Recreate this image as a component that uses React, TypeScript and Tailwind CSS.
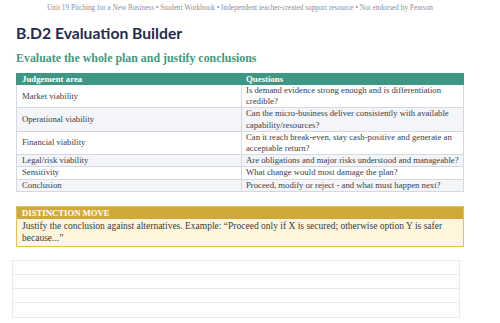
import React from "react";

const rows: [string, string[]][] = [
  ["Market viability", ["Is demand evidence strong enough and is differentiation", "credible?"]],
  ["Operational viability", ["Can the micro-business deliver consistently with available", "capability/resources?"]],
  ["Financial viability", ["Can it reach break-even, stay cash-positive and generate an", "acceptable return?"]],
  ["Legal/risk viability", ["Are obligations and major risks understood and manageable?"]],
  ["Sensitivity", ["What change would most damage the plan?"]],
  ["Conclusion", ["Proceed, modify or reject - and what must happen next?"]],
];

export default function App() {
  return (
    <div className="w-[500px] h-[323px] bg-white overflow-hidden" style={{ fontFamily: '"Liberation Serif", serif' }}>
      <div className="w-[480px] pt-[3px] text-center text-[7.3px] leading-[9px] text-[#8a8f9a] whitespace-nowrap">
        Unit 19 Pitching for a New Business • Student Workbook • Independent teacher-created support resource • Not endorsed by Pearson
      </div>
      <div className="px-4">
        <h1 className="mt-[11px] text-[15.7px] leading-[20px] font-bold text-[#1f2c4f]" style={{ fontFamily: '"Lato", sans-serif' }}>
          B.D2 Evaluation Builder
        </h1>
        <h2 className="mt-[8px] text-[11.9px] leading-[15px] font-bold text-[#3f9a80]">
          Evaluate the whole plan and justify conclusions
        </h2>
        <table className="mt-[7px] w-[448px] table-fixed border-collapse text-[8.7px] leading-[11.2px] text-[#3b404a]">
          <thead>
            <tr className="bg-[#3e9684] text-white text-[8.8px]">
              <th className="w-[225px] text-left font-bold px-[5px] h-[11px] leading-[10px] border border-[#3e9684]">Judgement area</th>
              <th className="text-left font-bold px-[4px] leading-[10px] border border-[#3e9684]">Questions</th>
            </tr>
          </thead>
          <tbody>
            {rows.map(([a, q], i) => (
              <tr key={a} className={i % 2 === 1 ? "bg-[#f3f5f8]" : "bg-white"}>
                <td className="px-[5px] border border-[#d3d8e2] align-middle whitespace-nowrap">{a}</td>
                <td className="pl-[4px] pr-0 border border-[#d3d8e2] align-top whitespace-nowrap">
                  {q.map((line, j) => (
                    <div key={j}>{line}</div>
                  ))}
                </td>
              </tr>
            ))}
          </tbody>
        </table>
        <div className="mt-[14px] w-[448px] border border-[#e2c158] bg-[#fdf6dc]">
          <div className="bg-[#cfa93a] text-white font-bold text-[8.7px] leading-[12px] px-[5px]">DISTINCTION MOVE</div>
          <div className="px-[5px] text-[9.5px] leading-[12.5px] text-[#3a3a3a] pt-[1px] pb-[1px] whitespace-nowrap">
            <div>Justify the conclusion against alternatives. Example: “Proceed only if X is secured; otherwise option Y is safer</div>
            <div>because...”</div>
          </div>
        </div>
      </div>
      <div className="ml-[12px] mt-[13px] w-[448px] border border-[#e8e9ee]">
        {[0, 1, 2, 3].map((i) => (
          <div key={i} className={"h-[14px] " + (i < 3 ? "border-b border-[#e8e9ee]" : "")} />
        ))}
      </div>
    </div>
  );
}
